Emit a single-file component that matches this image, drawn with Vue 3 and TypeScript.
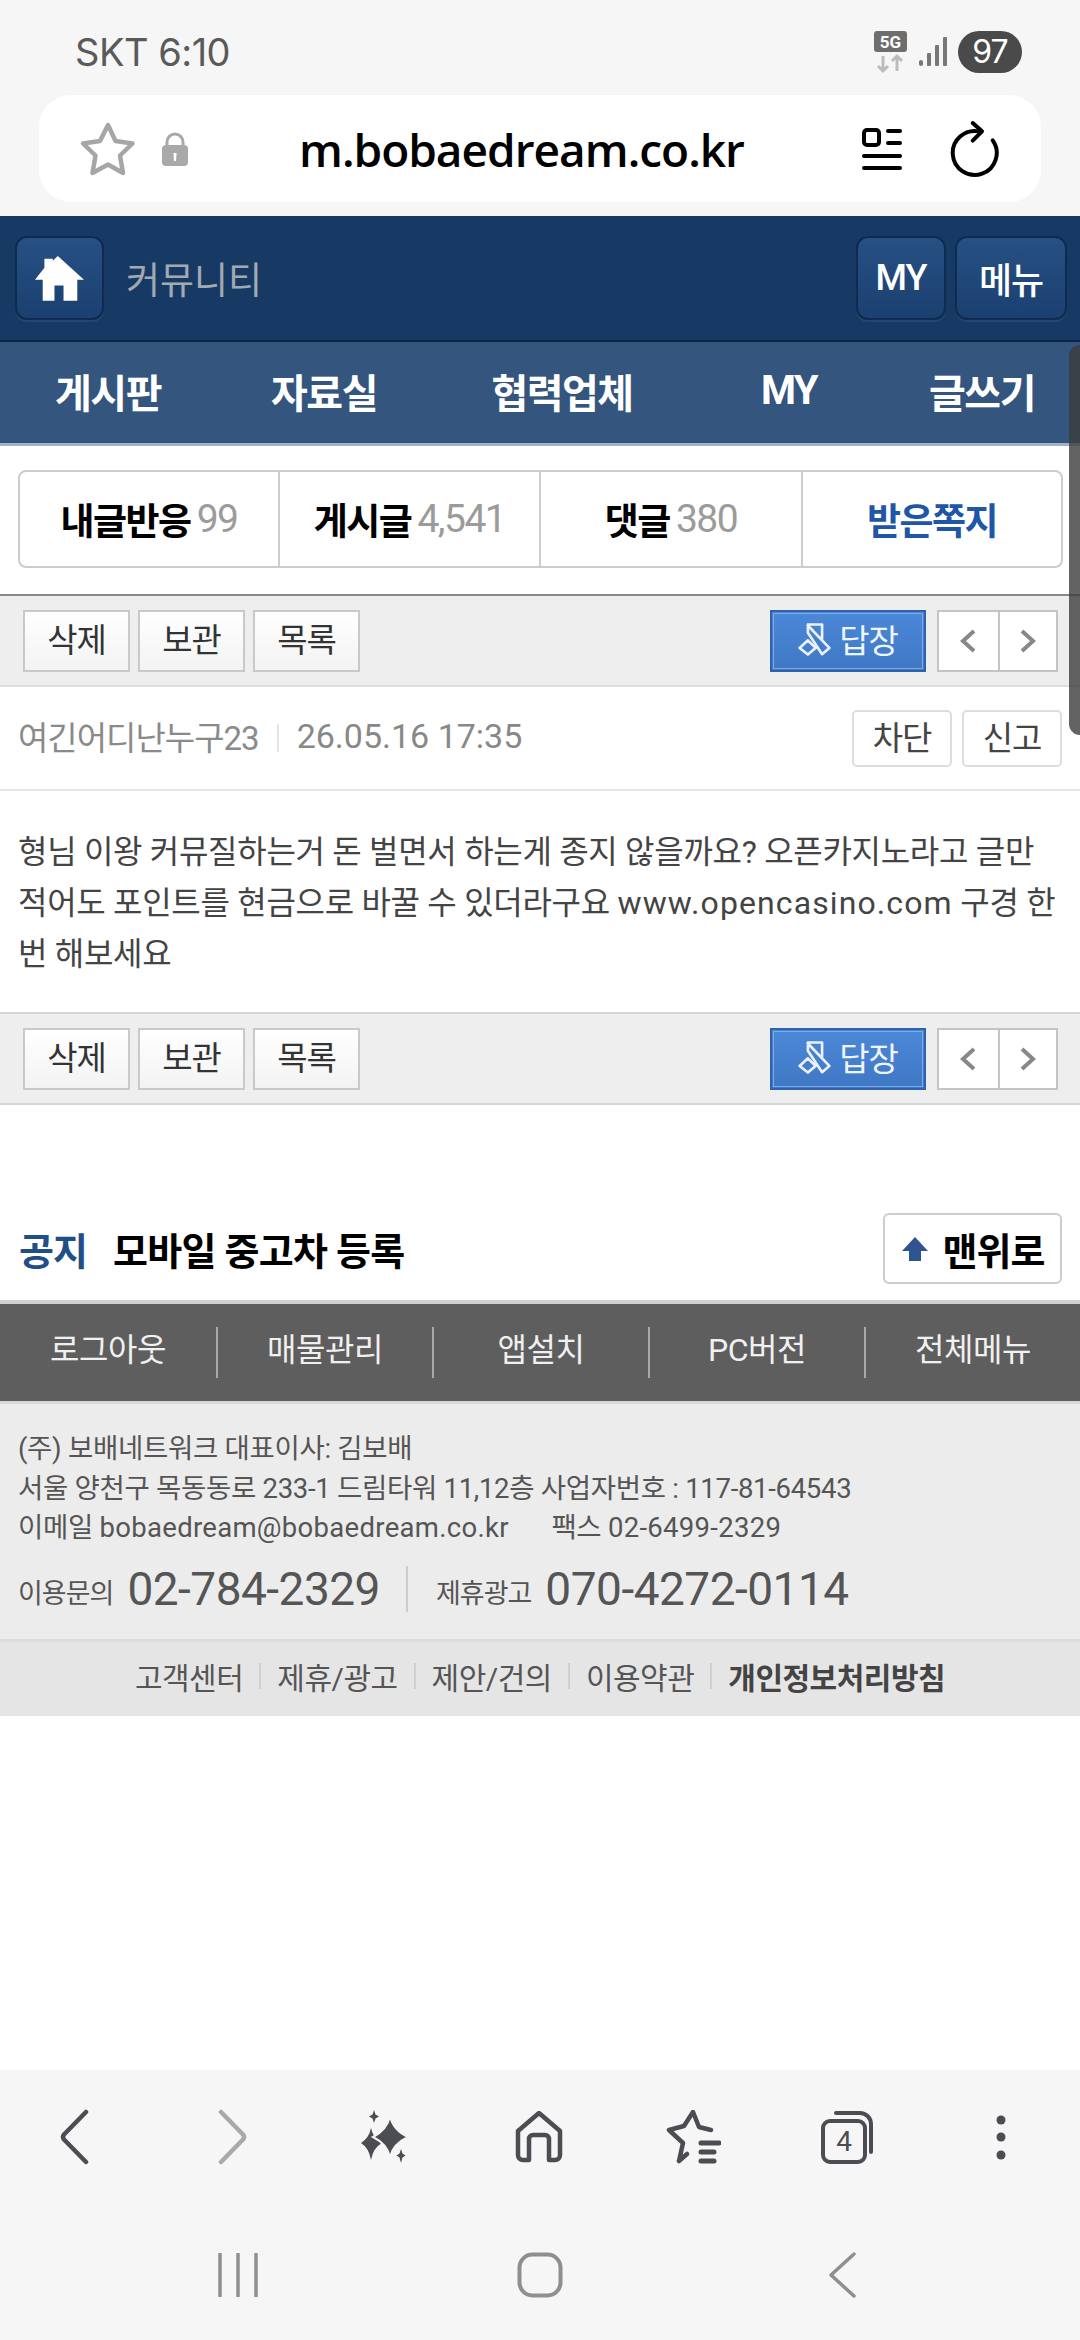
<script setup lang="ts">
const mainNav = ['게시판', '자료실', '협력업체', 'MY', '글쓰기']
const tabs = [
  { label: '내글반응', count: '99' },
  { label: '게시글', count: '4,541' },
  { label: '댓글', count: '380' },
  { label: '받은쪽지', count: '' },
]
const actions = ['삭제', '보관', '목록']
const footerNav = ['로그아웃', '매물관리', '앱설치', 'PC버전', '전체메뉴']
const footerLinks = ['고객센터', '제휴/광고', '제안/건의', '이용약관', '개인정보처리방침']
</script>

<template>
  <div class="page">
    <div class="chrome">
      <div class="status">
        <span class="carrier">SKT 6:10</span>
        <div class="status-right">
          <svg width="38" height="46" viewBox="0 0 38 46">
            <rect x="2" y="2" width="33" height="21" rx="3" fill="#6e6e6e" />
            <text x="18.5" y="19" text-anchor="middle" class="five-g">5G</text>
            <path d="M11 27v15M6 37l5 5 5-5" fill="none" stroke="#bcbcbc" stroke-width="3" />
            <path d="M25 42V27M20 32l5-5 5 5" fill="none" stroke="#bcbcbc" stroke-width="3" />
          </svg>
          <svg width="30" height="32" viewBox="0 0 30 32" class="signal">
            <rect x="0" y="24" width="4" height="6" rx="2" fill="#777" />
            <rect x="8" y="17" width="4" height="13" rx="1" fill="#777" />
            <rect x="16" y="9" width="4" height="21" rx="1" fill="#777" />
            <rect x="24" y="1" width="4" height="29" rx="1" fill="#777" />
          </svg>
          <span class="battery">97</span>
        </div>
      </div>

      <div class="urlbar">
        <svg class="star" width="58" height="56" viewBox="0 0 58 56">
          <path d="M29 4l7.500 16 17 2.500-12.500 12 3 17.500L29 43.500l-15.500 8.500 3-17.500-12.500-12 17-2.500z" fill="none" stroke="#a6a6a6" stroke-width="4.500" stroke-linejoin="round" />
        </svg>
        <svg class="lock" width="28" height="36" viewBox="0 0 28 36">
          <path d="M6 16V11a8 8 0 0 1 16 0v5" fill="none" stroke="#a9a9a9" stroke-width="3" />
          <rect x="1" y="14" width="26" height="21" rx="4" fill="#a9a9a9" />
          <path d="M12.500 22h3l-.5 8h-2z" fill="#fff" />
        </svg>
        <span class="url">m.bobaedream.co.kr</span>
        <svg class="reader" width="40" height="42" viewBox="0 0 40 42">
          <rect x="2" y="2" width="15" height="15" rx="3" fill="none" stroke="#000" stroke-width="4" />
          <path d="M26 3h12M26 15h12M2 28h36M2 40h36" stroke="#000" stroke-width="4" stroke-linecap="round" />
        </svg>
        <svg class="reload" width="50" height="58" viewBox="0 -3 50 58">
          <path d="M42.700 17.300A22 22 0 1 1 29 8.400" fill="none" stroke="#000" stroke-width="4" stroke-linecap="round" />
          <path d="M22.700 0L32 8.300l-9.300 9.400" fill="none" stroke="#000" stroke-width="4" stroke-linecap="round" stroke-linejoin="round" />
        </svg>
      </div>
    </div>

    <header class="topbar">
      <button class="blue-btn home">
        <svg width="49" height="45" viewBox="107 597 146 134">
          <path d="M175 597L253 668H233V730H192V685H165V730H130V668H107L135 632V605H160V611z" fill="#fff" />
        </svg>
      </button>
      <span class="topbar-title">커뮤니티</span>
      <button class="blue-btn my">MY</button>
      <button class="blue-btn menu">메뉴</button>
    </header>

    <nav class="mainnav">
      <a v-for="item in mainNav" :key="item">{{ item }}</a>
    </nav>

    <div class="tabs">
      <div v-for="tab in tabs" :key="tab.label" class="tab">
        <b :class="{ inbox: !tab.count }">{{ tab.label }}</b>
        <span v-if="tab.count">{{ tab.count }}</span>
      </div>
    </div>

    <div class="toolbar first">
      <button v-for="a in actions" :key="a" class="act">{{ a }}</button>
      <button class="reply">
        <svg width="33" height="34" viewBox="55 100 100 102">
          <path d="M82 107H128V152M82 107L150 178 128 197 85 132V107M60 178L85 155 108 178 85 198z" fill="none" stroke="#eaf1fb" stroke-width="8" stroke-linejoin="round" />
        </svg>
        답장
      </button>
      <div class="pager">
        <span><svg width="20" height="26" viewBox="0 0 20 26"><path d="M16 3L5 13l11 10" fill="none" stroke="#888" stroke-width="4" /></svg></span>
        <span><svg width="20" height="26" viewBox="0 0 20 26"><path d="M4 3l11 10L4 23" fill="none" stroke="#888" stroke-width="4" /></svg></span>
      </div>
    </div>

    <div class="meta">
      <span class="author">여긴어디난누구23</span>
      <i class="meta-sep"></i>
      <span class="date">26.05.16 17:35</span>
      <button class="small first-small">차단</button>
      <button class="small">신고</button>
    </div>

    <p class="content">형님 이왕 커뮤질하는거 돈 벌면서 하는게 종지 않을까요? 오픈카지노라고 글만 적어도 포인트를 현금으로 바꿀 수 있더라구요 <span class="latin">www.opencasino.com</span> 구경 한번 해보세요</p>

    <div class="toolbar second">
      <button v-for="a in actions" :key="a" class="act">{{ a }}</button>
      <button class="reply">
        <svg width="33" height="34" viewBox="55 100 100 102">
          <path d="M82 107H128V152M82 107L150 178 128 197 85 132V107M60 178L85 155 108 178 85 198z" fill="none" stroke="#eaf1fb" stroke-width="8" stroke-linejoin="round" />
        </svg>
        답장
      </button>
      <div class="pager">
        <span><svg width="20" height="26" viewBox="0 0 20 26"><path d="M16 3L5 13l11 10" fill="none" stroke="#888" stroke-width="4" /></svg></span>
        <span><svg width="20" height="26" viewBox="0 0 20 26"><path d="M4 3l11 10L4 23" fill="none" stroke="#888" stroke-width="4" /></svg></span>
      </div>
    </div>

    <div class="notice">
      <b class="notice-tag">공지</b>
      <b class="notice-title">모바일 중고차 등록</b>
      <button class="totop">
        <svg width="28" height="26" viewBox="0 0 28 26">
          <path d="M14 1l13 14h-7v10H8V15H1z" fill="#2f5590" />
        </svg>
        맨위로
      </button>
    </div>

    <footer class="footer">
      <div class="footnav">
        <a v-for="item in footerNav" :key="item">{{ item }}</a>
      </div>
      <div class="company">
        <div>(주) 보배네트워크 대표이사: 김보배</div>
        <div>서울 양천구 목동동로 233-1 드림타워 11,12층 사업자번호 : 117-81-64543</div>
        <div>이메일 <span class="wide">bobaedream@bobaedream.co.kr</span> <span class="fax">팩스 <span class="wide">02-6499-2329</span></span></div>
        <div class="phones">
          <span class="ph-label">이용문의</span><span class="ph-num">02-784-2329</span>
          <i class="ph-sep"></i>
          <span class="ph-label">제휴광고</span><span class="ph-num">070-4272-0114</span>
        </div>
      </div>
      <div class="links">
        <a v-for="(l, i) in footerLinks" :key="l" :class="{ strong: i === 4 }">{{ l }}</a>
      </div>
    </footer>

    <div class="browser-bar">
      <div class="browser-icons">
        <svg class="nav-back" width="30" height="56" viewBox="0 0 30 56"><path d="M27 3L5 25.500q-2 2.500 0 5L27 53" fill="none" stroke="#4c4d52" stroke-width="4.500" stroke-linecap="round" stroke-linejoin="round" /></svg>
        <svg class="nav-forward" width="30" height="56" viewBox="0 0 30 56"><path d="M3 3l22 22.500q2 2.500 0 5L3 53" fill="none" stroke="#a9a9ab" stroke-width="4.500" stroke-linecap="round" stroke-linejoin="round" /></svg>
        <svg width="50" height="54" viewBox="0 0 50 54">
          <path d="M11 18Q13 28 22 33 13 38 11 50 9 38 1 33 9 28 11 18z" fill="#4c4d52" />
          <path d="M30 6Q33 20 48 27 33 34 30 47 27 34 13 27 27 20 30 6z" fill="#4c4d52" stroke="#f6f6f6" stroke-width="2" />
          <path d="M14 0l1.500 4.500 3.500 2-3.500 2L14 13l-1.500-4.500-3.500-2 3.500-2zM41 39l1.500 4.500 3 2-3 2L41 53l-1.500-5.500-3-2 3-2z" fill="#4c4d52" />
        </svg>
        <svg width="48" height="52" viewBox="0 0 48 52">
          <path d="M14 49H8a5 5 0 0 1-5-5V20L24 2l21 18v24a5 5 0 0 1-5 5h-6V28a4 4 0 0 0-4-4H18a4 4 0 0 0-4 4z" fill="none" stroke="#4c4d52" stroke-width="4.500" stroke-linejoin="round" />
        </svg>
        <svg width="56" height="54" viewBox="0 0 56 54">
          <path d="M14 51L18 33 4 20l15-4 9-14 6 15 12 3M14 51l8-7" fill="none" stroke="#4c4d52" stroke-width="4.500" stroke-linecap="round" stroke-linejoin="round" />
          <path d="M36 33h18M36 42h13M36 51h13" stroke="#4c4d52" stroke-width="5" stroke-linecap="round" />
        </svg>
        <div class="tabs-icon">
          <svg width="54" height="54" viewBox="0 0 54 54">
            <rect x="3" y="11" width="42" height="41" rx="7" fill="none" stroke="#4c4d52" stroke-width="4" />
            <path d="M16 3h24a11 11 0 0 1 11 11v28" fill="none" stroke="#4c4d52" stroke-width="4" stroke-linecap="round" />
          </svg>
          <span>4</span>
        </div>
        <svg width="10" height="46" viewBox="0 0 10 46">
          <circle cx="5" cy="6" r="4.500" fill="#4c4d52" />
          <circle cx="5" cy="23" r="4.500" fill="#4c4d52" />
          <circle cx="5" cy="41" r="4.500" fill="#4c4d52" />
        </svg>
      </div>
      <div class="system-nav">
        <svg width="40" height="44" viewBox="0 0 40 44"><path d="M2 1v42M20 1v42M38 1v42" stroke="#8f8f8f" stroke-width="3.500" stroke-linecap="round" /></svg>
        <svg width="46" height="46" viewBox="0 0 46 46"><rect x="2.500" y="2.500" width="41" height="41" rx="13" fill="none" stroke="#8f8f8f" stroke-width="4" /></svg>
        <svg width="28" height="46" viewBox="0 0 28 46"><path d="M26 2L3 23l23 21" fill="none" stroke="#8f8f8f" stroke-width="3.500" stroke-linecap="round" stroke-linejoin="round" /></svg>
      </div>
    </div>

    <div class="scrollbar"></div>
  </div>
</template>

<style scoped>
.page {
  position: relative;
  width: 1080px;
  height: 2340px;
  display: flex;
  flex-direction: column;
  background: #fff;
  overflow: hidden;
  font-family: Roboto, "Noto Sans CJK KR", sans-serif;
}
button {
  font-family: inherit;
  padding: 0;
  cursor: pointer;
}

.chrome {
  background: #f6f6f6;
  padding-bottom: 14px;
}
.status {
  height: 95px;
  padding: 8px 58px 0 75px;
  display: flex;
  align-items: center;
  justify-content: space-between;
  box-sizing: border-box;
}
.carrier {
  font-size: 38px;
  color: #5a5a5a;
  font-family: Inter, sans-serif;
  letter-spacing: -0.5px;
}
.status-right {
  display: flex;
  align-items: center;
  gap: 9px;
}
.five-g {
  font: 700 17px Roboto, sans-serif;
  fill: #fff;
}
.battery {
  width: 64px;
  height: 42px;
  border-radius: 21px;
  background: #4a4a4a;
  color: #fff;
  font-size: 32px;
  font-family: Inter, sans-serif;
  line-height: 42px;
  text-align: center;
  letter-spacing: -1px;
}

.urlbar {
  height: 107px;
  margin: 0 39px;
  padding: 0 41px 0 40px;
  display: flex;
  align-items: center;
  background: #fff;
  border-radius: 32px;
}
.lock {
  margin-left: 24px;
}
.url {
  flex: 1;
  text-align: center;
  font-family: "Open Sans", sans-serif;
  font-size: 46px;
  font-weight: 600;
  color: #000;
  letter-spacing: -1px;
  margin-right: 8px;
}
.reader {
  margin-right: 48px;
}

.topbar {
  height: 124px;
  padding: 0 13px 0 15px;
  display: flex;
  align-items: center;
  background: #173a65;
  border-bottom: 2px solid #0d2543;
  box-sizing: content-box;
}
.blue-btn {
  height: 84px;
  border: 2px solid #0f2c50;
  border-radius: 12px;
  background: linear-gradient(#275083, #1a4070);
  box-shadow: 0 2px 0 #25476f;
  color: #fff;
  font-size: 36px;
  font-weight: 500;
  letter-spacing: -1px;
}
.home {
  width: 89px;
  display: flex;
  align-items: center;
  justify-content: center;
}
.topbar-title {
  flex: 1;
  margin-left: 22px;
  font-size: 37px;
  color: #a3a9b1;
}
.my {
  width: 90px;
}
.menu {
  width: 112px;
  margin-left: 9px;
}

.mainnav {
  height: 101px;
  display: grid;
  grid-template-columns: 216px 216px 260px 194px 192px;
  align-items: center;
  background: #33557e;
  border-bottom: 3px solid #a3b3c6;
  box-sizing: content-box;
}
.mainnav a {
  margin-bottom: 4px;
  text-align: center;
  color: #fff;
  font-size: 40px;
  font-weight: 700;
  letter-spacing: -1.500px;
}

.tabs {
  margin: 24px 17px 0 18px;
  height: 98px;
  display: grid;
  grid-template-columns: 258px 261px 262px 1fr;
  border: 2px solid #ccc;
  border-radius: 8px;
  box-sizing: border-box;
}
.tab {
  display: flex;
  align-items: center;
  justify-content: center;
  gap: 6px;
  border-left: 2px solid #ccc;
  font-size: 37px;
  letter-spacing: -1.500px;
}
.tab:first-child {
  border-left: 0;
}
.tab b {
  color: #000;
}
.tab b.inbox {
  color: #1f56a5;
}
.tab span {
  color: #9b9b9b;
  font-size: 39px;
}

.toolbar {
  display: flex;
  align-items: center;
  height: 89px;
  padding: 0 22px 0 23px;
  background: #eee;
  box-sizing: content-box;
}
.toolbar.first {
  margin-top: 26px;
  border-top: 2px solid #888;
  border-bottom: 2px solid #ddd;
}
.toolbar.second {
  border-top: 2px solid #d6d6d6;
  border-bottom: 2px solid #d6d6d6;
}
.act {
  width: 107px;
  height: 62px;
  margin-right: 8px;
  padding-bottom: 6px;
  border: 2px solid #c9c9c9;
  background: linear-gradient(#fff, #f3f3f3);
  font-size: 33px;
  color: #333;
  letter-spacing: -1px;
}
.reply {
  width: 156px;
  height: 62px;
  margin-left: auto;
  padding-bottom: 4px;
  display: flex;
  align-items: center;
  justify-content: center;
  gap: 8px;
  border: 2px solid #2f62a8;
  outline: 1px solid #79aaea;
  outline-offset: -4px;
  background: linear-gradient(#4c88d8, #3f78c4);
  color: #eef4fc;
  font-size: 33px;
  letter-spacing: -1px;
}
.pager {
  width: 121px;
  height: 62px;
  margin-left: 11px;
  display: grid;
  grid-template-columns: 1fr 1fr;
  border: 2px solid #c4c4c4;
  background: #fff;
  box-sizing: border-box;
}
.pager span {
  display: flex;
  align-items: center;
  justify-content: center;
}
.pager span + span {
  border-left: 2px solid #c4c4c4;
}

.meta {
  height: 102px;
  padding: 0 18px;
  display: flex;
  align-items: center;
  border-bottom: 2px solid #e6e6e6;
  box-sizing: content-box;
}
.author {
  margin-bottom: 4px;
  font-size: 33px;
  color: #8a8a8a;
  letter-spacing: -1px;
}
.meta-sep {
  width: 2px;
  height: 28px;
  margin: 0 18px;
  background: #e4e4e4;
}
.date {
  margin-bottom: 4px;
  font-size: 34px;
  color: #888;
}
.small {
  width: 100px;
  height: 57px;
  margin-left: 10px;
  padding-bottom: 6px;
  border: 2px solid #ddd;
  border-radius: 5px;
  background: #fff;
  font-size: 33px;
  color: #444;
  letter-spacing: -1px;
}
.first-small {
  margin-left: auto;
}

.content {
  margin: 0;
  height: 221px;
  padding: 36px 18px 0;
  font-size: 32px;
  line-height: 51px;
  color: #444;
  box-sizing: border-box;
  letter-spacing: -0.3px;
  word-break: break-all;
}
.latin {
  letter-spacing: 1.100px;
}

.notice {
  height: 71px;
  margin: 108px 18px 0 19px;
  display: flex;
  align-items: center;
}
.notice-tag {
  font-size: 38px;
  color: #1f4f86;
  letter-spacing: -1px;
}
.notice-title {
  flex: 1;
  margin-left: 26px;
  font-size: 38px;
  color: #000;
  letter-spacing: -0.7px;
}
.totop {
  width: 179px;
  height: 71px;
  display: flex;
  align-items: center;
  justify-content: center;
  gap: 14px;
  border: 2px solid #ccc;
  border-radius: 6px;
  background: #fff;
  font-size: 38px;
  font-weight: 700;
  color: #000;
  letter-spacing: -1px;
}

.footer {
  margin-top: 16px;
  background: #ececec;
}
.footnav {
  height: 97px;
  display: grid;
  grid-template-columns: repeat(5, 1fr);
  align-items: center;
  background: #5e5e5e;
  border-top: 4px solid #d0d0d0;
  border-bottom: 3px solid #d8d8d8;
  box-sizing: content-box;
}
.footnav a {
  height: 51px;
  line-height: 47px;
  text-align: center;
  color: #f0f0f0;
  font-size: 32px;
  letter-spacing: -0.5px;
  border-left: 2px solid #a8a8a8;
}
.footnav a:first-child {
  border-left: 0;
}
.company {
  height: 235px;
  padding: 25px 18px 0;
  font-size: 27.500px;
  line-height: 39.500px;
  color: #555;
  box-sizing: border-box;
  letter-spacing: -0.3px;
}
.wide {
  letter-spacing: 0.3px;
}
.fax {
  margin-left: 36px;
}
.phones {
  display: flex;
  align-items: flex-end;
  margin-top: 18px;
  height: 46px;
}
.ph-label {
  font-size: 27px;
  line-height: 36px;
  letter-spacing: -1px;
}
.ph-num {
  margin-left: 14px;
  font-size: 46px;
  line-height: 46px;
  letter-spacing: -0.5px;
}
.ph-sep {
  width: 2px;
  height: 46px;
  margin: 0 28px 0 26px;
  background: #ccc;
}
.links {
  height: 77px;
  padding-bottom: 7px;
  display: flex;
  align-items: center;
  justify-content: center;
  background: #e5e5e5;
  border-top: 3px solid #dcdcdc;
  box-sizing: border-box;
  font-size: 30px;
  color: #555;
  letter-spacing: -0.5px;
}
.links a + a {
  margin-left: 16px;
  padding-left: 18px;
  background: linear-gradient(#d0d0d0, #d0d0d0) left center / 2px 26px no-repeat;
}
.links .strong {
  font-weight: 700;
  color: #444;
}

.browser-bar {
  margin-top: auto;
  height: 270px;
  background: #f6f6f6;
}
.browser-icons {
  height: 134px;
  display: grid;
  grid-template-columns: repeat(7, 154px);
  justify-items: center;
  align-items: center;
}
.nav-back {
  margin-right: 6px;
}
.nav-forward {
  margin-left: 4px;
}
.tabs-icon {
  position: relative;
  width: 54px;
  height: 54px;
}
.tabs-icon svg {
  display: block;
}
.tabs-icon span {
  position: absolute;
  left: 3px;
  top: 11px;
  width: 42px;
  height: 41px;
  font: 28px/42px Roboto, sans-serif;
  text-align: center;
  color: #4c4d52;
}
.system-nav {
  margin-top: 48px;
  padding: 0 87px;
  display: grid;
  grid-template-columns: repeat(3, 302px);
  justify-items: center;
  align-items: center;
}

.scrollbar {
  position: absolute;
  right: 0;
  top: 345px;
  width: 11px;
  height: 390px;
  background: rgba(60, 60, 60, 0.8);
  border-radius: 12px 0 0 12px;
}
</style>

<style>
body {
  background: #fff;
}
</style>
